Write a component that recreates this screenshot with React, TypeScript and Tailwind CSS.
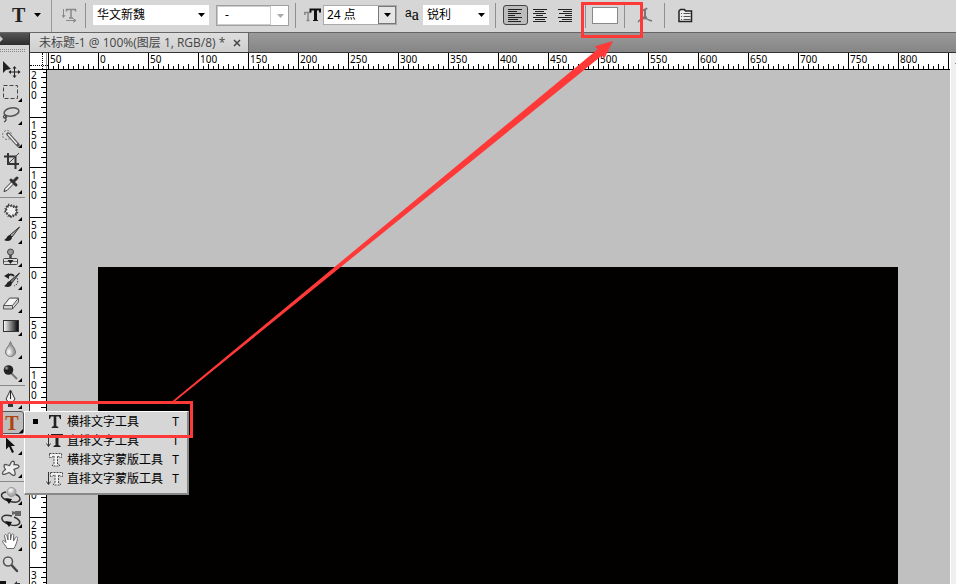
import type { ReactNode } from "react";

const HORIZONTAL = ["50", "0", "50", "100", "150", "200", "250", "300", "350", "400", "450", "500", "550", "600", "650", "700", "750", "800", ""]
const VERTICAL = ["200", "150", "100", "50", "0", "50", "100", "150", "200", "250", "300"]
const TICKS = [1, 2, 3, 4, 5, 6, 7, 8, 9]

const MENU_ITEMS = [
    { key: "h", label: "横排文字工具", active: true, mask: false, vertical: false },
    { key: "v", label: "直排文字工具", active: false, mask: false, vertical: true },
    { key: "hm", label: "横排文字蒙版工具", active: false, mask: true, vertical: false },
    { key: "vm", label: "直排文字蒙版工具", active: false, mask: true, vertical: true },
]

type Tool = { name: string, icon: ReactNode, corner?: boolean }

const TOOLS_SELECT: Tool[] = [
    {
        name: "移动工具", corner: false, icon: <>
            <path d="M3 3v12l3-3 5-1z" fill="#222" />
            <path d="M14.5 9v10M9.5 14h10" stroke="#222" />
            <path d="M14.5 8l2 2.500h-4zM14.500 20l2-2.500h-4zM8.500 14l2.500-2v4zM20.500 14l-2.500-2v4z" fill="#222" />
        </>
    },
    { name: "矩形选框工具", icon: <rect x="3.500" y="4.500" width="14" height="13" fill="none" stroke="#444" strokeDasharray="4 2" /> },
    {
        name: "套索工具", icon: <>
            <ellipse cx="11.500" cy="8" rx="7.500" ry="4" fill="none" stroke="#555" strokeWidth="1.500" transform="rotate(-10 11.5 8)" />
            <path d="M5 11c-2 1-2 3 0 3s2-2 0-2M5 14c2 1 1 3-1 4" fill="none" stroke="#444" strokeWidth="1.300" />
        </>
    },
    {
        name: "快速选择工具", icon: <>
            <circle cx="7" cy="8" r="4.500" fill="none" stroke="#777" strokeDasharray="2 1.500" />
            <path d="M8 7l10 11" stroke="#555" strokeWidth="3.500" strokeLinecap="round" />
            <path d="M8.500 7.500l8 9" stroke="#eee" strokeWidth="1.500" strokeLinecap="round" />
        </>
    },
    {
        name: "裁剪工具", icon: <>
            <path d="M8 3v11h11M4 6.500h11.500V19" fill="none" stroke="#333" strokeWidth="2" />
            <path d="M8 14L19 3" stroke="#444" />
        </>
    },
    {
        name: "吸管工具", icon: <>
            <path d="M4 18.500l1-3 7-7 2 2-7 7z" fill="#eee" stroke="#333" />
            <path d="M11 7l5 5M13 9l4-4" stroke="#333" strokeWidth="3" strokeLinecap="round" />
        </>
    },
]

const TOOLS_PAINT: Tool[] = [
    {
        name: "修补工具", icon: <>
            <path d="M8 5l8 2 1 7-7 3-5-6z" fill="#eee" stroke="#555" />
            <path d="M8 5l8 2 1 7-7 3-5-6z" stroke="#333" strokeWidth="3" strokeDasharray="1 1.700" />
        </>
    },
    {
        name: "画笔工具", icon: <>
            <path d="M19.500 4l-9.500 8 2 2z" fill="#aaa" stroke="#333" />
            <path d="M10 12c-3 0-3 4-6 5 3 1.500 8 1.500 8-3z" fill="#222" />
        </>
    },
    {
        name: "仿制图章工具", icon: <>
            <circle cx="10.500" cy="6" r="3" fill="#999" stroke="#444" />
            <path d="M10.500 9v4" stroke="#444" strokeWidth="2.500" />
            <rect x="3.500" y="12.500" width="14" height="6" rx="1" fill="#ddd" stroke="#444" />
            <path d="M4 15.500h13" stroke="#777" />
            <path d="M7.500 14h6l-3 4z" fill="#222" />
        </>
    },
    {
        name: "历史记录画笔工具", icon: <>
            <path d="M19.500 4l-9.500 8 2 2z" fill="#777" stroke="#333" />
            <path d="M10 12c-3 0-3 4-6 5 3 1.500 8 1.500 8-3z" fill="#222" />
            <path d="M8 7c2-2 4-2 6 0" fill="none" stroke="#222" strokeWidth="2" />
            <path d="M9 4v6L4 7z" fill="#222" />
            <path d="M17 9c2 4 0 7-3 8" fill="none" stroke="#222" strokeDasharray="1.500 1.500" />
        </>
    },
    {
        name: "橡皮擦工具", icon: <>
            <path d="M3.500 13.500l6-7.500H18.500l-6 7.500zM3.500 13.500V17h9v-3.500M12.500 17l6-7V6" fill="#d0d0d0" stroke="#555" strokeLinejoin="round" />
            <path d="M5 13l5-6h7l-5 6z" fill="#f4f4f4" />
        </>
    },
    {
        name: "渐变工具", icon: <>
            <defs><linearGradient id="toolGradient"><stop stopColor="#fff" /><stop offset="1" /></linearGradient></defs>
            <rect x="3.500" y="5.500" width="15" height="11" fill="url(#toolGradient)" stroke="#333" />
        </>
    },
    {
        name: "模糊工具", icon: <>
            <defs><radialGradient id="drop" cx=".35" cy=".7"><stop stopColor="#fff" /><stop offset="1" stopColor="#999" /></radialGradient></defs>
            <path d="M10.500 3.500C9.500 8 5.500 10 5.500 14c0 6 10 6 10 0 0-4-4-6-5-10.500z" fill="url(#drop)" stroke="#777" />
        </>
    },
    {
        name: "减淡工具", icon: <>
            <defs><radialGradient id="ball" cx=".3" cy=".3"><stop stopColor="#aaa" /><stop offset=".5" stopColor="#222" /></radialGradient></defs>
            <path d="M11 12l6 6" stroke="#777" strokeWidth="2" />
            <circle cx="8.500" cy="9" r="4.800" fill="url(#ball)" />
        </>
    },
]

const TOOLS_VECTOR: Tool[] = [
    {
        name: "路径选择工具", icon: <path d="M6 3.500v12l3-3 3 6.500 2-1-3-6h4z" fill="#111" />
    },
    {
        name: "自定形状工具", icon: <path d="M12 4.500c2-1 3 1 2 3 2 0 5 0 5 2s-4 2-5 3c1 2 2 6 0 6s-3-2-5-3c-2 1-6 3-6.500 1s2-3 3-4c-2-3-2-5 0-5 1 0 3 1 4 1 1-1 1-3 2.500-4z" fill="#eee" stroke="#555" strokeWidth="1.300" />
    },
]

const TOOLS_VIEW: Tool[] = [
    {
        name: "3D 旋转工具", icon: <>
            <path d="M6 8c-6 1-6 5 0 8 5 2 11 3 13 1s1-5-4-7" fill="none" stroke="#333" strokeWidth="1.500" />
            <path d="M5 14l7 1-3 5z" fill="#111" />
            <circle cx="11.500" cy="8" r="4.500" fill="url(#globe)" stroke="#999" />
            <defs><radialGradient id="globe" cx=".4" cy=".3"><stop stopColor="#fff" /><stop offset="1" stopColor="#aaa" /></radialGradient></defs>
        </>
    },
    {
        name: "3D 环绕相机工具", icon: <>
            <path d="M12 9C3 7 0 10 3 14c4 4 13 6 16 3 2-2 0-5-5-7" fill="none" stroke="#333" strokeWidth="1.500" />
            <path d="M5 14l7 1-3 5z" fill="#111" />
            <path d="M12 4l3 1V4h6v5h-6V7l-3 1z" fill="#666" />
        </>
    },
    {
        name: "抓手工具", icon: <path d="M7 18.500c-1-3-3-4-4.500-7 0-1.500 2-1 3.500 1L4.500 6c0-2 2-2 2.500 0l1 4L8 4.500c0-2 2.500-2 2.500 0V10l1-5c.5-2 2.500-1 2.200.5L13.500 11l2-3.500c1-1.500 2.500-.5 2 1-.5 4-2 7-3.500 10z" fill="#fff" stroke="#666" />
    },
    {
        name: "缩放工具", corner: false, icon: <>
            <path d="M11.500 12l5.500 6" stroke="#444" strokeWidth="2.500" strokeLinecap="round" />
            <circle cx="8" cy="8.500" r="4.500" fill="#ddd" stroke="#555" strokeWidth="1.500" />
        </>
    },
]

const ToolButton = ({ name, icon, corner = true }: Tool) => (
    <button aria-label={name} className="block w-6 h-[23px]">
        <svg width="24" height="23" viewBox="0 0 24 23" fill="none">
            {icon}
            {corner && <path d="M22 17v4h-4z" fill="#000" />}
        </svg>
    </button>
)

const ToolDivider = () => <div className="h-1 w-[25px] pt-px"><div className="h-px bg-[#8a8a8a]" /></div>

const Divider = () => <div className="w-px h-[25px] bg-[#8f8f8f] shrink-0" />

const Caret = ({ color = "#000" }: { color?: string }) => (
    <svg width="7" height="4" viewBox="0 0 7 4"><path d="M0 0h7L3.500 4z" fill={color} /></svg>
)

const Dropdown = ({ label, value, className }: { label: string, value: string, className: string }) => (
    <div className={`relative h-5 bg-white shrink-0 ${className}`}>
        <select aria-label={label} className="block appearance-none w-full h-5 pl-1 text-xs leading-4 bg-transparent">
            <option>{value}</option>
        </select>
        <div className="absolute right-1 top-2 pointer-events-none"><Caret /></div>
    </div>
)

const AlignIcon = ({ align }: { align: string }) => {
    const widths = [14, 9, 13, 7, 14, 10, 13]
    return (
        <svg width="15" height="15" viewBox="0 0 15 15">
            {widths.map((w, i) => {
                const x = align === "left" ? 0 : align === "right" ? 14 - w : Math.floor((14 - w) / 2)
                return <rect key={i} x={x} y={1 + i * 2} width={w} height="1" fill="#222" />
            })}
        </svg>
    )
}

const OptionsBar = () => (
    <header className="flex items-center h-8 pb-[2px] bg-[#d6d6d6] shrink-0">
        <button aria-label="文字工具预设" className="flex items-center justify-between w-[29px] ml-3">
            <span className="font-['Liberation_Serif',serif] font-bold text-xl leading-5 text-[#222]">T</span>
            <Caret />
        </button>
        <div className="w-px h-8 -mb-[2px] bg-[#999] ml-[10px] shrink-0" />
        <button aria-label="切换文本取向" className="ml-[10px]">
            <svg width="15" height="16" viewBox="0 0 15 16" fill="none" stroke="#888">
                <path d="M1.500 2v8M0 8l1.500 2.500L3 8M4 13.500h10M11 11.500l3 2-3 2" />
                <path d="M4.500 4.500v-2h9v2M9 3v8M7 11h4" strokeWidth="1.500" />
            </svg>
        </button>
        <div className="ml-2"><Divider /></div>
        <Dropdown label="字体" value="华文新魏" className="w-[116px] ml-[7px]" />
        <div className="relative w-[73px] h-[21px] ml-[7px] border border-[#a0a0a0] bg-white shrink-0">
            <select aria-label="字体样式" className="block appearance-none w-[54px] h-[19px] pl-[7px] pb-1 text-xs leading-4 border border-[#ccc] bg-white">
                <option>-</option>
            </select>
            <div className="absolute right-1 top-2"><Caret color="#aaa" /></div>
        </div>
        <div className="ml-[6px]"><Divider /></div>
        <svg width="17" height="16" viewBox="0 0 17 16" fill="none" className="ml-2 shrink-0">
            <path d="M.8 8V5.500h6M4 6v7M2.500 13.500h3" stroke="#888" strokeWidth="1.500" />
            <path d="M6.500 5.500v-3h9.500v3" stroke="#111" strokeWidth="2" />
            <path d="M11.500 3v10" stroke="#111" strokeWidth="3" />
            <path d="M9 13.500h5" stroke="#111" />
        </svg>
        <div className="flex h-5 w-[74px] ml-[2px] border border-[#aaa] bg-white shrink-0">
            <input aria-label="字体大小" defaultValue="24 点" className="w-[54px] pl-[3px] text-xs" />
            <button aria-label="选择字体大小" className="flex-1 flex items-center justify-center border border-[#777] bg-[#e6e6e6]">
                <Caret />
            </button>
        </div>
        <span className="w-[26px] pl-2 flex items-center text-base leading-4 font-['Liberation_Serif',serif]">
            <span className="text-xs leading-4 pb-1 font-['Liberation_Sans',sans-serif]">a</span>a
        </span>
        <Dropdown label="消除锯齿" value="锐利" className="w-[66px]" />
        <div className="ml-[6px]"><Divider /></div>
        <button aria-label="左对齐文本" className="flex items-center justify-center w-[25px] h-5 ml-[7px] rounded-[3px] border border-[#444] bg-[#bcbcbc]"><AlignIcon align="left" /></button>
        <button aria-label="居中对齐文本" className="ml-[5px]"><AlignIcon align="center" /></button>
        <button aria-label="右对齐文本" className="ml-[10px]"><AlignIcon align="right" /></button>
        <div className="ml-3"><Divider /></div>
        <button aria-label="文本颜色" className="w-[26px] h-[17px] ml-[6px] border border-[#888] bg-white" />
        <div className="ml-[6px]"><Divider /></div>
        <button aria-label="创建文字变形" className="ml-3">
            <svg width="16" height="16" viewBox="0 0 16 16" fill="none" stroke="#777">
                <path d="M4 5c1-3 4-1 6-4M8 2.500v7.500M6 10.500h4" strokeWidth="2" />
                <path d="M1 15l3-3c3-1 5-1 8 1l3 1" strokeWidth="1.500" />
            </svg>
        </button>
        <div className="ml-[11px]"><Divider /></div>
        <button aria-label="字符和段落面板" className="ml-[13px]">
            <svg width="15" height="15" viewBox="0 0 15 15" fill="none" stroke="#222">
                <path d="M1 13.500V3l1.500-1.500h4l1 1.500h6v10.500z" fill="#eee" strokeWidth="1.500" />
                <path d="M3 5.500h1M3 8.500h1M3 11.500h1M5.500 5.500h7M5.500 8.500h7M5.500 11.500h7" stroke="#555" />
            </svg>
        </button>
    </header>
)

const TypeIcon = ({ mask, vertical }: { mask: boolean, vertical: boolean }) => (
    <svg width="18" height="17" viewBox="0 0 18 17" fill="none">
        {vertical && <path d="M3.500 2v12M1.500 11.500l2 3 2-3" stroke="#333" />}
        {mask
            ? <path d={vertical ? "M5.500 2.500h12v4h-2l-1-1.500h-1v8l2 1v1h-7v-1l1.500-1V5h-1L7 6.500H5.500z" : "M4.500 2.500h12v4h-2l-1-1.500h-1v8l2 1v1h-7v-1l1.500-1V5h-1L7 6.500H4.500z"} fill="#f2f2f2" stroke="#444" strokeDasharray="2 1" />
            : <path d={vertical ? "M6 2h12v4h-1l-1-2.500h-2.500V13l2 1v1h-7v-1l2-1V3.500H8L7 6H6z" : "M4 2h12v4h-1l-1-2.500h-2.700V13l2 1v1h-6.600v-1l2-1V3.500H6L5 6H4z"} fill="#222" />}
    </svg>
)

const TypeTool = () => (
    <div className="relative">
        <button aria-label="横排文字工具" className="block w-6 h-[23px] rounded-[3px] border border-[#555] bg-[#bdbdbd] relative">
            <span className="block font-['Liberation_Serif',serif] font-bold text-xl leading-5 text-[#ad4310]">T</span>
            <svg width="4" height="4" className="absolute right-0 bottom-0"><path d="M4 0v4H0z" /></svg>
        </button>
        <ul role="menu" className="absolute z-20 left-6 top-0 w-[165px] h-[84px] bg-[#d6d6d6] border-t border-l border-white border-b-2 border-b-[#888] border-r-2 border-r-[#888] text-xs">
            {MENU_ITEMS.map((item) =>
                <li key={item.key} role="none">
                    <button role="menuitem" className="flex items-center w-full h-[19px] leading-[19px] text-black">
                        <span className="w-5 pl-2 shrink-0">{item.active && <span className="block w-[5px] h-[5px] bg-black" />}</span>
                        <TypeIcon mask={item.mask} vertical={item.vertical} />
                        <span className="ml-1 flex-1 text-left whitespace-nowrap">{item.label}</span>
                        <span className="pr-2">T</span>
                    </button>
                </li>
            )}
        </ul>
    </div>
)

const Toolbox = () => (
    <aside className="w-[30px] shrink-0 bg-[#d6d6d6] border-r border-[#333]">
        <div className="h-3 bg-linear-to-b from-[#555] to-[#2e2e2e]">
            <svg width="4" height="12" viewBox="0 0 4 12"><path d="M0 3l3 3-3 3z" fill="#ccc" /></svg>
        </div>
        <div className="h-[13px] pt-1">
            <div className="flex flex-col gap-px w-[25px]">
                <div className="border-t border-dotted border-[#888]" />
                <div className="border-t border-dotted border-[#888]" />
            </div>
        </div>
        {TOOLS_SELECT.map((tool) => <ToolButton key={tool.name} {...tool} />)}
        <ToolDivider />
        {TOOLS_PAINT.map((tool) => <ToolButton key={tool.name} {...tool} />)}
        <ToolDivider />
        <ToolButton name="钢笔工具" icon={<>
            <path d="M10.500 2l4.500 9-3 4H9l-3-4z" fill="#eee" stroke="#333" />
            <path d="M10.500 3v8" stroke="#222" />
            <path d="M8 15h5v4H8z" fill="#333" />
        </>} />
        <TypeTool />
        {TOOLS_VECTOR.map((tool) => <ToolButton key={tool.name} {...tool} />)}
        <ToolDivider />
        {TOOLS_VIEW.map((tool) => <ToolButton key={tool.name} {...tool} />)}
        <svg width="24" height="10" viewBox="0 0 24 10" className="mt-1">
            <path d="M0 1h6v9H0z" fill="#111" />
            <path d="M14 4l3-3v2h3v5h-2V5h-1v2z" fill="#333" />
        </svg>
    </aside>
)

const HorizontalRuler = () => (
    <div className="flex h-[17px] bg-white border-b border-black overflow-hidden">
        <div className="relative w-[18px] h-4 shrink-0">
            <div className="absolute left-0 right-0 top-3 border-t border-dotted border-black" />
            <div className="absolute top-0 bottom-0 left-3 border-l border-dotted border-black" />
            <div className="absolute top-0 bottom-0 right-px border-l border-[#999]" />
        </div>
        {HORIZONTAL.map((value, i) =>
            <div key={i} className="relative flex items-end w-[50px] h-4 shrink-0 border-l border-black pl-1">
                <span className="absolute left-px top-0 text-[10px] leading-[13px]">{value}</span>
                {TICKS.map((t) => <i key={t} className={`w-[5px] shrink-0 border-l border-black ${t % 2 ? "h-[3px]" : "h-[5px]"}`} />)}
            </div>
        )}
    </div>
)

const VerticalRuler = () => (
    <div className="w-[17px] shrink-0 bg-white border-r border-black overflow-hidden">
        <div className="-mt-[3px]">
            {VERTICAL.map((value, i) =>
                <div key={i} className="relative flex flex-col items-end h-[50px] border-t border-black pt-1">
                    <span className="absolute left-px top-[2px] w-[6px] break-all text-[10px] leading-[10px]">{value}</span>
                    {TICKS.map((t) => <i key={t} className={`h-[5px] shrink-0 border-t border-black ${t % 2 ? "w-[3px]" : "w-[5px]"}`} />)}
                </div>
            )}
        </div>
    </div>
)

const Annotations = () => (
    <svg width="956" height="584" viewBox="0 0 956 584" fill="none" className="absolute left-0 top-0 z-30 pointer-events-none">
        <rect x="582.500" y="3.500" width="59" height="33" stroke="#ff3838" strokeWidth="3" />
        <rect x="1.500" y="402.500" width="190" height="34" stroke="#ff3838" strokeWidth="3" />
        <path d="M172 401.500L598 49l-3.500-2.500L613 41l-9 18-2-3.500L173.500 402.500z" fill="#ff3838" />
    </svg>
)

const App = () => {
    return (
        <div className="relative flex flex-col h-screen overflow-hidden bg-[#d6d6d6] text-black font-['Noto_Sans','Noto_Sans_CJK_SC',sans-serif]">
            <OptionsBar />
            <div className="flex flex-1 min-h-0 border-t border-[#666]">
                <Toolbox />
                <main className="flex flex-col flex-1 min-w-0">
                    <div className="flex h-5 shrink-0 bg-linear-to-b from-[#9b9b9b] to-[#858585] border-b border-[#333]">
                        <div className="flex items-center justify-between w-[219px] pl-[9px] pr-[7px] bg-linear-to-b from-[#dedede] to-[#cfcfcf] border-r border-[#666] text-xs text-[#444] font-['Open_Sans','Noto_Sans_CJK_SC',sans-serif]">
                            <span className="whitespace-nowrap">未标题-1 @ 100%(图层 1, RGB/8) *</span>
                            <button aria-label="关闭">
                                <svg width="8" height="8" viewBox="0 0 8 8" stroke="#444" strokeWidth="1.500"><path d="M1 1l6 6M7 1L1 7" /></svg>
                            </button>
                        </div>
                    </div>
                    <div className="flex flex-1 min-h-0">
                        <div className="flex flex-col flex-1 min-w-0">
                            <HorizontalRuler />
                            <div className="flex flex-1 min-h-0">
                                <VerticalRuler />
                                <div className="flex flex-1 bg-[#c0c0c0] pt-[197px] pl-[51px] pr-[52px]">
                                    <div className="flex-1 bg-[#030000]" />
                                </div>
                            </div>
                        </div>
                        <div className="w-[6px] shrink-0 bg-[#efefef] border-l border-white pt-[10px] pl-1">
                            <div className="h-px bg-[#888]" />
                        </div>
                    </div>
                </main>
            </div>
            <Annotations />
        </div>
    )
}

export default App
